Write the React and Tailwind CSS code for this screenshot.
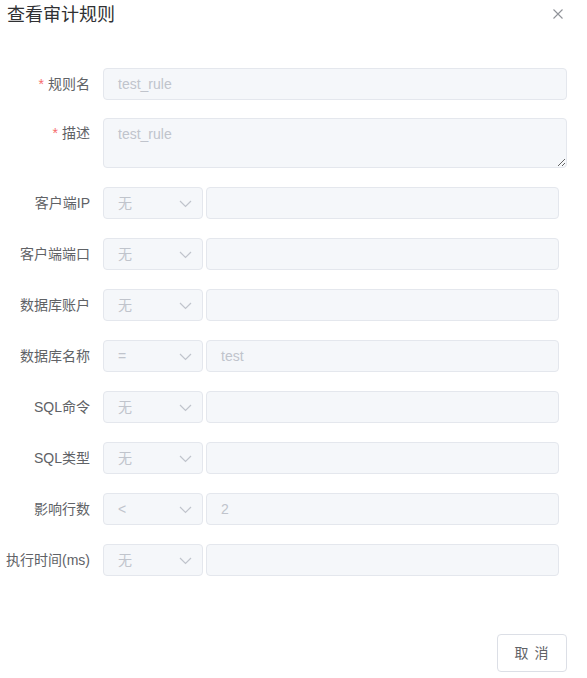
import React from "react";

const FONT = { fontFamily: '"Liberation Sans", "Noto Sans CJK SC", sans-serif' };

function Chevron() {
  return (
    <svg width="13" height="8" viewBox="0 0 13 8" className="absolute right-[10px] top-[12px]">
      <path d="M1 1 L6.5 6.5 L12 1" fill="none" stroke="#c0c4cc" strokeWidth="1.2" />
    </svg>
  );
}

function Label({ required, children, top }) {
  return (
    <div
      className={`w-[90px] shrink-0 text-right text-[14px] text-[#606266] whitespace-nowrap ${
        top ? "leading-[30px]" : "leading-[32px]"
      }`}
    >
      {required && <span className="text-[#f56c6c] mr-[4px]">*</span>}
      {children}
    </div>
  );
}

function ConditionRow({ label, op, value }) {
  return (
    <div className="flex items-start h-[32px] mb-[19px]">
      <Label>{label}</Label>
      <div className="flex ml-[13px] gap-[3px]">
        <div className="relative w-[100px] h-[32px] bg-[#f5f7fa] border border-[#e4e7ed] rounded-[4px] pl-[14px] text-[14px] leading-[30px] text-[#c0c4cc]">
          {op}
          <Chevron />
        </div>
        <div className="w-[353px] h-[32px] bg-[#f5f7fa] border border-[#e4e7ed] rounded-[4px] pl-[14px] text-[14px] leading-[30px] text-[#c0c4cc]">
          {value}
        </div>
      </div>
    </div>
  );
}

const rows = [
  { label: "客户端IP", op: "无", value: "" },
  { label: "客户端端口", op: "无", value: "" },
  { label: "数据库账户", op: "无", value: "" },
  { label: "数据库名称", op: "=", value: "test" },
  { label: "SQL命令", op: "无", value: "" },
  { label: "SQL类型", op: "无", value: "" },
  { label: "影响行数", op: "<", value: "2" },
  { label: "执行时间(ms)", op: "无", value: "" },
];

export default function App() {
  return (
    <div className="w-[587px] h-[678px] bg-white flex flex-col" style={FONT}>
      {/* Header */}
      <div className="flex items-start justify-between pl-[7px] pr-[24px] pt-[3px] h-[68px]">
        <span className="text-[18px] leading-[24px] text-[#303133]">查看审计规则</span>
        <svg width="10" height="10" viewBox="0 0 10 10" className="mt-[6px]">
          <path d="M0.5 0.5 L9.5 9.5 M9.5 0.5 L0.5 9.5" stroke="#909399" strokeWidth="1.1" />
        </svg>
      </div>

      {/* Form */}
      <div className="flex flex-col">
        <div className="flex items-start h-[32px] mb-[18px]">
          <Label required>规则名</Label>
          <div className="ml-[13px] w-[464px] h-[32px] bg-[#f5f7fa] border border-[#e4e7ed] rounded-[4px] pl-[14px] text-[14px] leading-[30px] text-[#c0c4cc]">
            test_rule
          </div>
        </div>
        <div className="flex items-start h-[50px] mb-[19px]">
          <Label required top>描述</Label>
          <textarea
            readOnly
            defaultValue="test_rule"
            className="ml-[13px] w-[464px] h-[50px] bg-[#f5f7fa] border border-[#e4e7ed] rounded-[4px] px-[14px] py-[5px] text-[14px] leading-[20px] text-[#c0c4cc] outline-none resize-y"
            style={FONT}
          />
        </div>
        {rows.map((r) => (
          <ConditionRow key={r.label} {...r} />
        ))}
      </div>

      {/* Footer */}
      <div className="flex justify-end pr-[20px] mt-[39px]">
        <button className="w-[70px] h-[38px] border border-[#dcdfe6] rounded-[4px] bg-white text-[14px] text-[#606266] tracking-[1px]">
          取 消
        </button>
      </div>
    </div>
  );
}
